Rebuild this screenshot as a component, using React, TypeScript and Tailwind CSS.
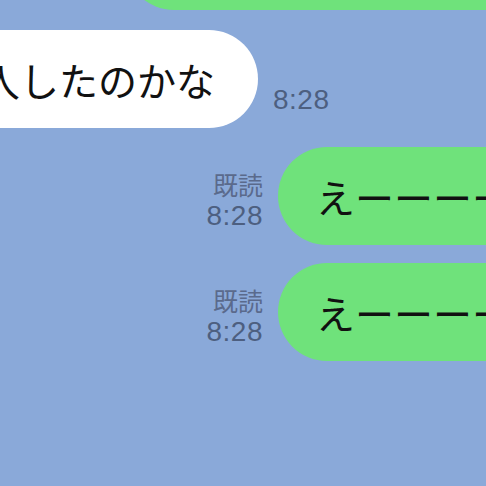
import React from "react";

const jp = "font-['Noto_Sans_CJK_JP',sans-serif]";
const meta = "font-['Liberation_Sans','Noto_Sans_CJK_JP',sans-serif] text-[#4d5f80] tracking-[0.5px]";

const SentMessage = ({ text }: { text: string }) => (
  <div className="flex items-center">
    <div className={`w-[70px] mt-[10px] flex flex-col items-end ${meta}`}>
      <span className={`text-[25px] leading-[30px] tracking-normal ${jp} text-[#5a6a8c]`}>既読</span>
      <span className="text-[28px] leading-[34px]">8:28</span>
    </div>
    <div className="ml-[15px] h-[98px] flex-1 rounded-l-[49px] bg-[#6fe27b] flex items-center pl-[38px] overflow-hidden">
      <span className={`text-[39px] whitespace-nowrap text-[#111] ${jp}`}>{text}</span>
    </div>
  </div>
);

export default function App() {
  return (
    <div className="w-[486px] h-[486px] overflow-hidden bg-[#8aa9d9] flex flex-col">
      <div className="mt-[-88px] ml-[125px] h-[98px] rounded-l-[49px] bg-[#6fe27b]" />

      <div className="mt-[20px] flex items-end">
        <div className="ml-[-40px] h-[98px] w-[298px] rounded-r-[49px] bg-white flex items-center pl-[21px]">
          <span className={`text-[39px] whitespace-nowrap text-[#111] ${jp}`}>入したのかな</span>
        </div>
        <span className={`ml-[15px] mb-[12px] text-[28px] leading-[32px] ${meta}`}>8:28</span>
      </div>

      <div className="mt-[19px] ml-[193px] flex flex-col gap-[18px]">
        <SentMessage text="えーーーーー" />
        <SentMessage text="えーーーーー" />
      </div>
    </div>
  );
}
